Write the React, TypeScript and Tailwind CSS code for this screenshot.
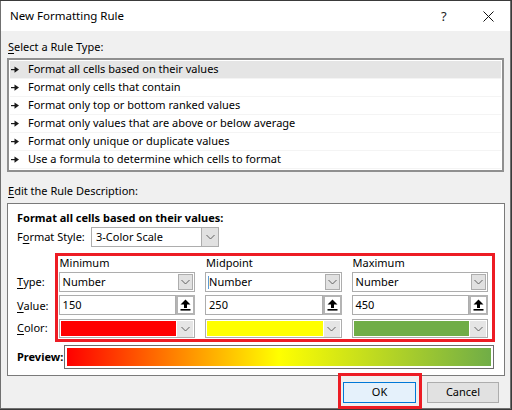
import React from "react";

const font = { fontFamily: '"Noto Sans", "Liberation Sans", sans-serif' };

function ListArrow() {
  return (
    <svg width="8" height="7" viewBox="0 0 8 7" className="shrink-0">
      <rect x="0" y="3" width="4.5" height="1.2" fill="#1a1a1a" />
      <path d="M3.5 0.5 L8 3.6 L3.5 6.7 Z" fill="#1a1a1a" />
    </svg>
  );
}

function Chevron() {
  return (
    <svg width="9" height="6" viewBox="0 0 9 6">
      <path d="M0.5 1 L4.5 5 L8.5 1" fill="none" stroke="#606060" strokeWidth="1" />
    </svg>
  );
}

function UpArrow() {
  return (
    <svg width="11" height="12" viewBox="0 0 11 12">
      <path d="M5.5 0.5 L10.5 5.5 L7 5.5 L7 9 L4 9 L4 5.5 L0.5 5.5 Z" fill="#000" />
      <rect x="0.5" y="10" width="10" height="1.6" fill="#000" />
    </svg>
  );
}

function Dropdown({ text, caret }: { text: string; caret?: boolean }) {
  return (
    <div className="h-[20px] border border-[#adadad] bg-white flex items-center relative">
      {caret && <div className="absolute left-[2px] top-[3px] w-px h-[13px] bg-[#5b9bd5]" />}
      <span className="pl-[3px] flex-1 text-[11px] text-[#000]">{text}</span>
      <div className="w-[15px] h-[16px] mr-[1px] border border-[#adadad] bg-[#e1e1e1] flex items-center justify-center">
        <Chevron />
      </div>
    </div>
  );
}

function ValueInput({ value }: { value: string }) {
  return (
    <div className="h-[20px] flex">
      <div className="flex-1 border border-[#adadad] bg-white flex items-center pl-[3px] text-[11px]">{value}</div>
      <div className="w-[19px] border-2 border-[#b4b4b4] bg-white flex items-center justify-center">
        <UpArrow />
      </div>
    </div>
  );
}

function ColorPick({ color }: { color: string }) {
  return (
    <div className="h-[19px] border border-[#adadad] bg-white flex items-center p-[1px]">
      <div className="flex-1 h-[15px]" style={{ background: color }} />
      <div className="w-[16px] h-[16px] ml-[1px] bg-[#e5e5e5] flex items-center justify-center">
        <Chevron />
      </div>
    </div>
  );
}

const rules = [
  "Format all cells based on their values",
  "Format only cells that contain",
  "Format only top or bottom ranked values",
  "Format only values that are above or below average",
  "Format only unique or duplicate values",
  "Use a formula to determine which cells to format",
];

export default function App() {
  return (
    <div className="w-[512px] h-[410px] bg-[#3a3a3a] overflow-hidden text-[#000]" style={font}>
      <div className="w-[511px] h-[408px] mt-px bg-[#f0f0f0] border-x border-b border-[#707070] relative">
        {/* title bar */}
        <div className="h-[30px] bg-white flex items-center pl-[9px] text-[11.5px] relative">
          <span>New Formatting Rule</span>
          <span className="absolute left-[440px] top-[6px] text-[13px] text-[#222]">?</span>
          <svg className="absolute left-[482px] top-[10px]" width="11" height="11" viewBox="0 0 11 11">
            <path d="M0.5 0.5 L10.5 10.5 M10.5 0.5 L0.5 10.5" stroke="#111" strokeWidth="1" />
          </svg>
        </div>

        <div className="px-[6px]">
          <div className="mt-[8px] h-[16px] leading-[16px] text-[11px] pl-[1px]">
            <span className="underline underline-offset-2">S</span>elect a Rule Type:
          </div>
          <div className="mt-[3px] border-2 border-[#8f8f8f] bg-white py-px px-px">
            {rules.map((r, i) => (
              <div
                key={r}
                className={
                  "h-[18px] flex items-center gap-[9px] pl-px text-[11px] border-b border-[#f4f4f4] " +
                  (i === 0 ? "bg-[#e5e5e5]" : "bg-white")
                }
              >
                <ListArrow />
                <span>{r}</span>
              </div>
            ))}
          </div>

          <div className="mt-[11px] h-[16px] leading-[16px] text-[11px] pl-[1px]">
            <span className="underline underline-offset-2">E</span>dit the Rule Description:
          </div>

          <div className="mt-[4px] w-[498px] border border-[#7a7a7a] bg-white pl-[9px] pr-[9px] pt-[6px] pb-[6px]">
            <div className="h-[16px] leading-[16px] text-[11px] font-bold">Format all cells based on their values:</div>
            <div className="mt-px flex items-center h-[20px]">
              <span className="w-[74px] text-[11px]">
                F<span className="underline underline-offset-2">o</span>rmat Style:
              </span>
              <div className="w-[128px] h-[20px] border border-[#adadad] bg-white flex items-center">
                <span className="flex-1 pl-[4px] text-[11px]">3-Color Scale</span>
                <div className="w-[17px] h-[18px] border-l border-[#adadad] bg-[#e1e1e1] flex items-center justify-center">
                  <Chevron />
                </div>
              </div>
            </div>

            <div className="mt-[6px] flex">
              <div className="w-[38px] text-[11px] pt-[19px]">
                <div className="h-[20px] flex items-center"><span className="underline underline-offset-2">T</span>ype:</div>
                <div className="h-[23px] flex items-center mt-[3px]"><span className="underline underline-offset-2">V</span>alue:</div>
                <div className="h-[20px] flex items-center"><span className="underline underline-offset-2">C</span>olor:</div>
              </div>
              <div className="w-[445px] border-[3px] border-[#ed1c24] pl-px pr-[4px] pb-px">
                <div className="grid grid-cols-3 gap-x-[10px] text-[11px]">
                  <div className="h-[16px] leading-[14px] pl-px">Minimum</div>
                  <div className="h-[16px] leading-[14px] pl-px">Midpoint</div>
                  <div className="h-[16px] leading-[14px] pl-px">Maximum</div>

                  <Dropdown text="Number" />
                  <Dropdown text="Number" caret />
                  <Dropdown text="Number" />

                  <div className="mt-[3px]"><ValueInput value="150" /></div>
                  <div className="mt-[3px]"><ValueInput value="250" /></div>
                  <div className="mt-[3px]"><ValueInput value="450" /></div>

                  <div className="mt-[4px]"><ColorPick color="#ff0000" /></div>
                  <div className="mt-[4px]"><ColorPick color="#ffff00" /></div>
                  <div className="mt-[4px]"><ColorPick color="#70ad47" /></div>
                </div>
              </div>
            </div>

            <div className="mt-[3px] flex items-center h-[24px]">
              <span className="w-[47px] text-[11px] font-bold">Preview:</span>
              <div className="w-[430px] h-[24px] border border-[#6d6d6d] p-[2px]">
                <div
                  className="w-full h-full"
                  style={{ background: "linear-gradient(to right, #ff0000 0%, #ffff00 50%, #70ad47 100%)" }}
                />
              </div>
            </div>
          </div>

          <div className="mt-[6px] flex justify-end gap-[11px] pr-[5px] relative">
            <div className="relative">
              <div className="w-[73px] h-[21px] border border-[#0078d7] bg-[#e5f1fb] flex items-center justify-center text-[11px]">
                OK
              </div>
              <div className="absolute left-[-5px] top-[-9px] w-[84px] h-[36px] border-[3px] border-[#ed1c24]" />
            </div>
            <div className="w-[72px] h-[21px] border border-[#adadad] bg-[#e1e1e1] flex items-center justify-center text-[11px]">
              Cancel
            </div>
          </div>
        </div>
      </div>
    </div>
  );
}
